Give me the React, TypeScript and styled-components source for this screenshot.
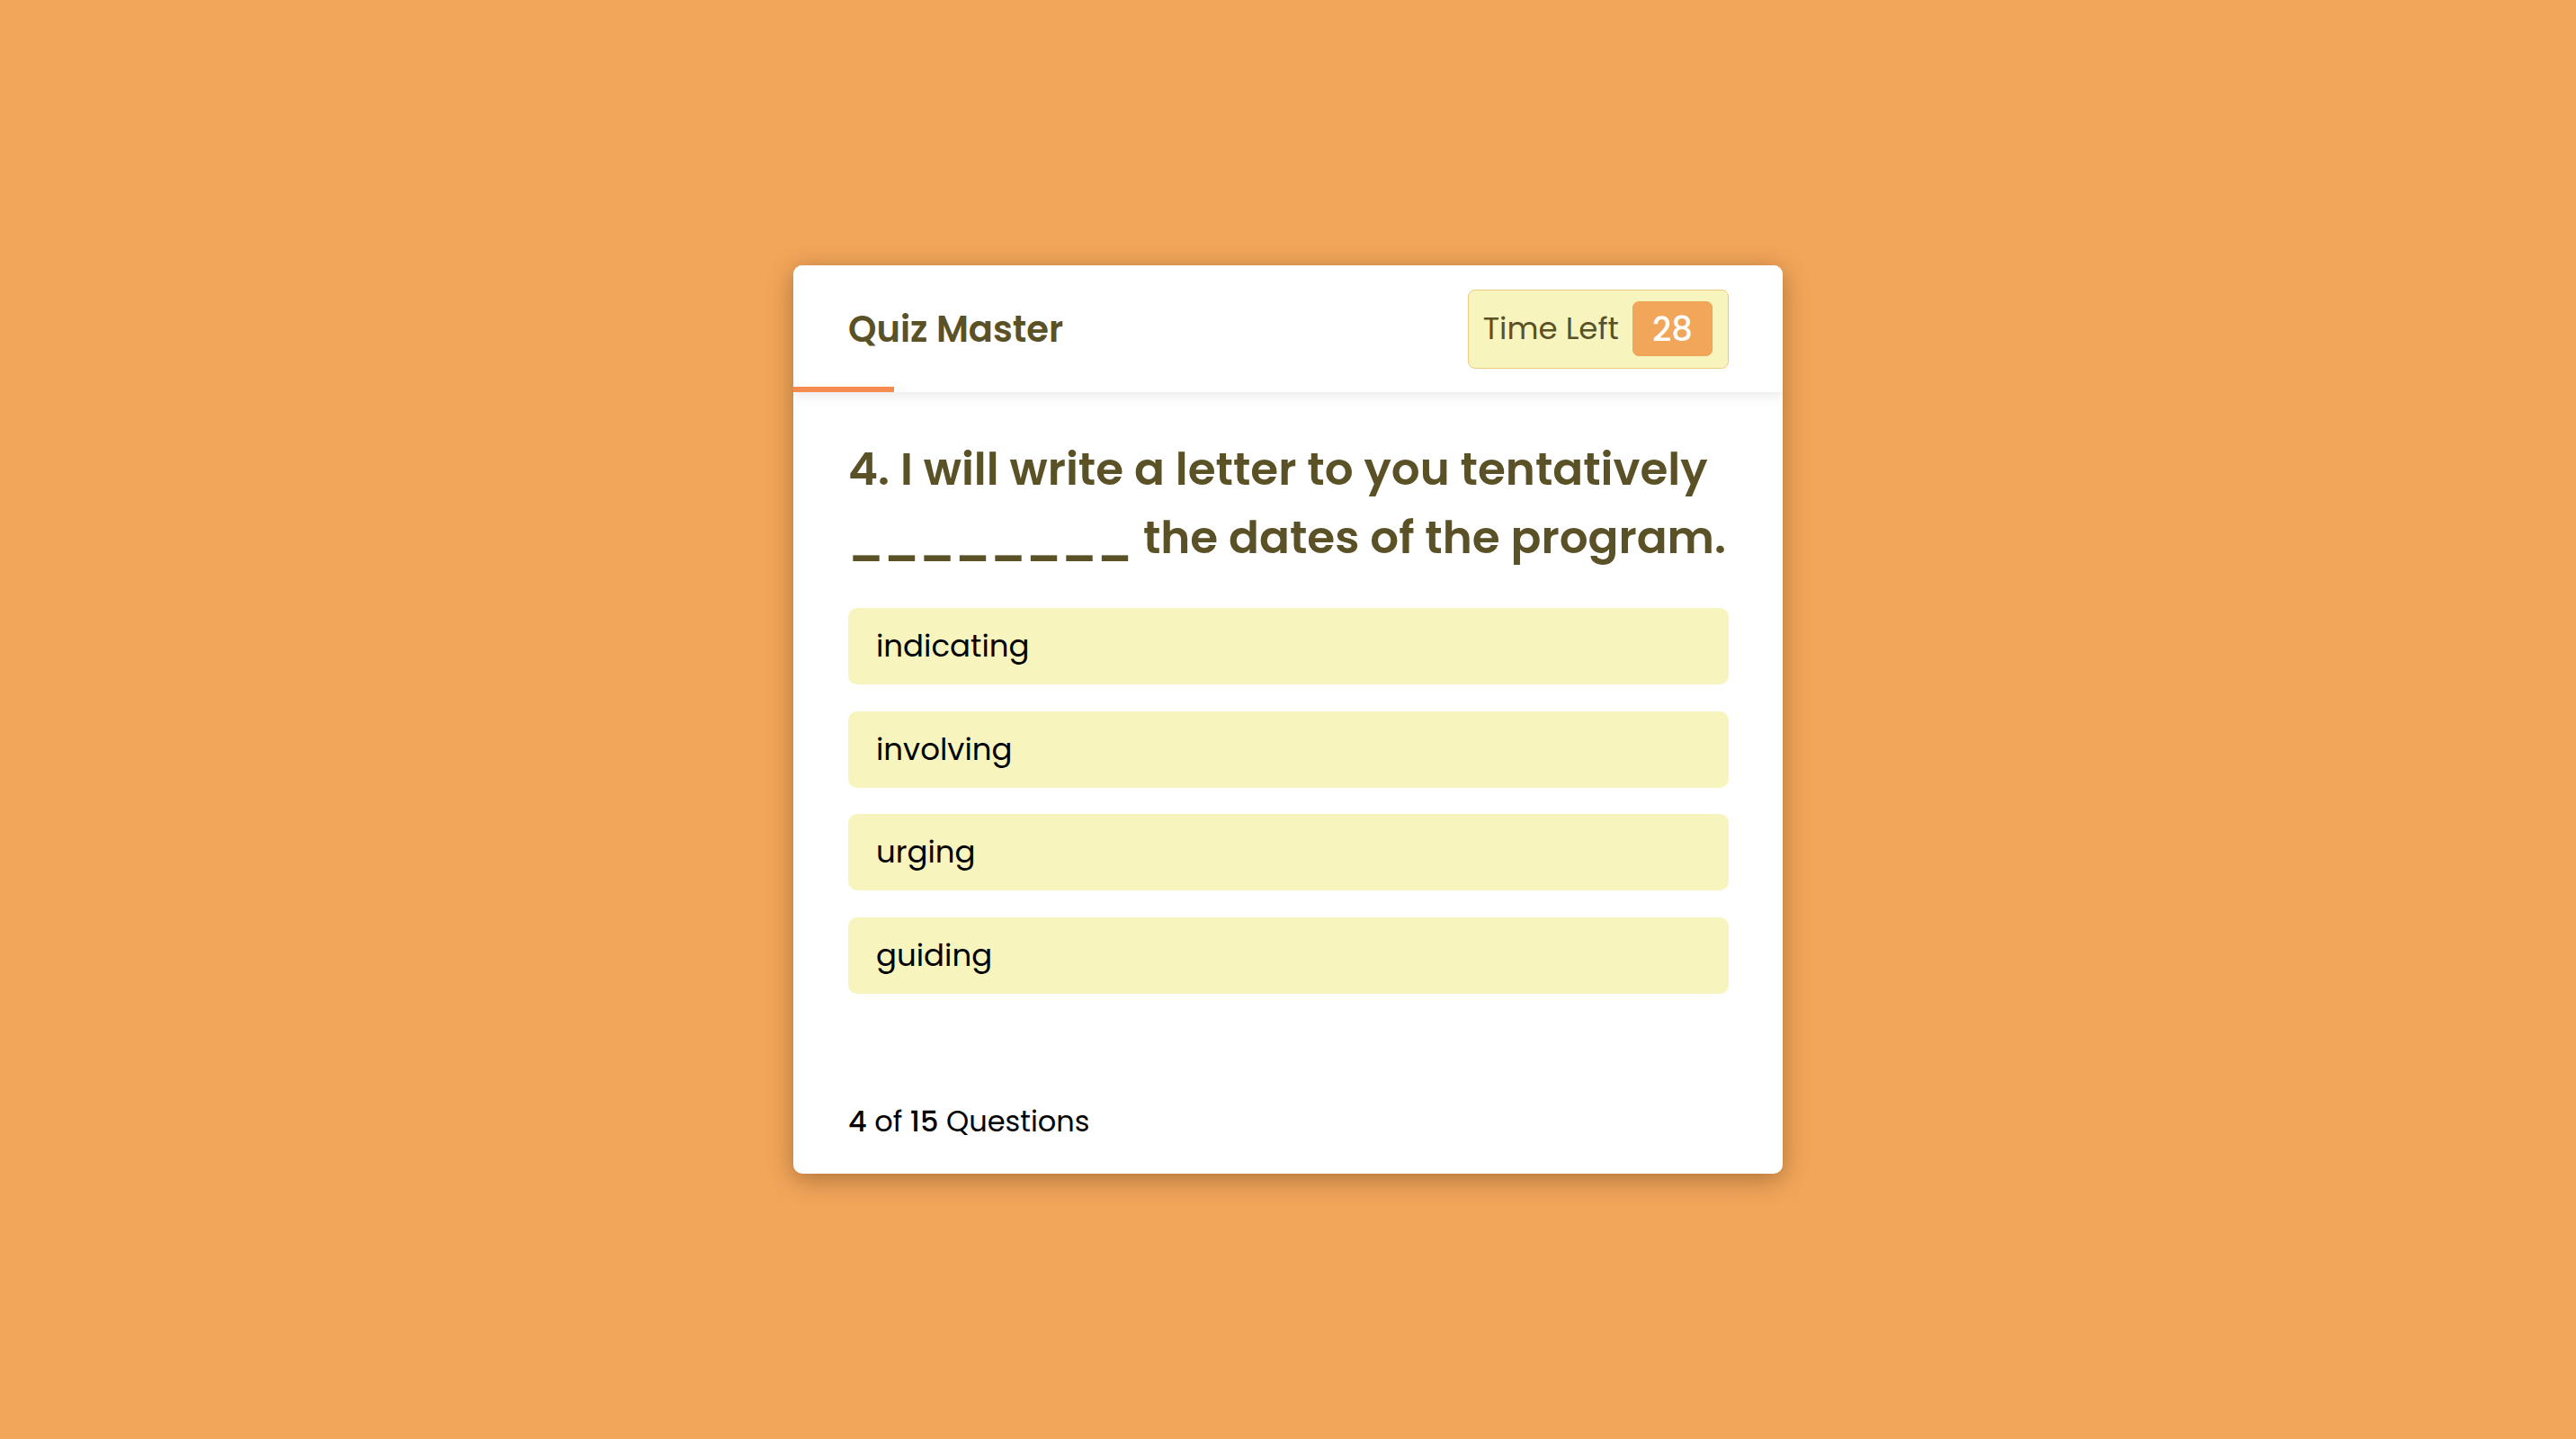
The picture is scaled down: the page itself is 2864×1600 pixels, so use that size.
import React from "react";
import styled, { createGlobalStyle } from "styled-components";

const GlobalStyle = createGlobalStyle`
  html, body {
    margin: 0;
    padding: 0;
    background: #f2a65a;
  }
  body {
    font-family: Poppins, "Open Sans", "Noto Sans", sans-serif;
  }
  * { box-sizing: border-box; }
`;

const Page = styled.main`
  min-height: 100vh;
  display: flex;
  align-items: center;
  justify-content: center;
`;

const Card = styled.section`
  width: 1100px;
  background: #ffffff;
  border-radius: 10px;
  box-shadow: 0 6px 28px rgba(60, 30, 0, 0.38);
  overflow: hidden;
`;

const Header = styled.header`
  position: relative;
  z-index: 1;
  height: 141px;
  padding: 0 60px 0 61px;
  display: flex;
  align-items: center;
  justify-content: space-between;
  background: #ffffff;
  box-shadow: 0 3px 14px rgba(0, 0, 0, 0.1);
`;

const Title = styled.h1`
  margin: 0;
  font-size: 40px;
  font-weight: 600;
  color: #5b5127;
`;

const Timer = styled.div`
  display: flex;
  align-items: center;
  gap: 15px;
  height: 88px;
  padding: 0 17px 0 16px;
  background: #f7f4bd;
  border: 1px solid #efc97f;
  border-radius: 8px;
`;

const TimerLabel = styled.span`
  font-size: 34px;
  font-weight: 400;
  color: #5b5127;
`;

const TimerValue = styled.span`
  width: 89px;
  height: 61px;
  display: flex;
  align-items: center;
  justify-content: center;
  background: #f2a65a;
  border: 1px solid #eda456;
  border-radius: 7px;
  color: #ffffff;
  font-size: 37px;
  font-weight: 500;
`;

const TimeBar = styled.div`
  position: absolute;
  left: 0;
  bottom: 0;
  height: 6px;
  background: #f68b4f;
`;

const Body = styled.div`
  padding: 48px 56px 0 61px;
`;

const Question = styled.h2`
  margin: 0;
  font-size: 50px;
  line-height: 76px;
  font-weight: 600;
  color: #5b5127;
`;

const Blank = styled.span`
  white-space: nowrap;
`;

const Options = styled.ul`
  list-style: none;
  margin: 40px 4px 0 0;
  padding: 0;
  display: flex;
  flex-direction: column;
  gap: 29.5px;
`;

const Option = styled.li`
  height: 85px;
  padding: 0 31px;
  display: flex;
  align-items: center;
  background: #f7f4bd;
  border-radius: 10px;
  font-size: 34px;
  color: #000000;
`;

const Footer = styled.footer`
  padding: 118px 60px 34px 61px;
  font-size: 32px;
  line-height: 48px;
  color: #000000;
`;

const Count = styled.b`
  font-weight: 500;
`;

const options = ["indicating", "involving", "urging", "guiding"];

export default function App() {
  const timeFraction = 112 / 1100;
  return (
    <>
      <GlobalStyle />
      <Page>
        <Card>
          <Header>
            <Title>Quiz Master</Title>
            <Timer>
              <TimerLabel>Time Left</TimerLabel>
              <TimerValue>28</TimerValue>
            </Timer>
            <TimeBar style={{ width: `${timeFraction * 100}%` }} />
          </Header>
          <Body>
            <Question>
              4. I will write a letter to you tentatively <Blank>________</Blank> the dates of the program.
            </Question>
            <Options>
              {options.map((o) => (
                <Option key={o}>{o}</Option>
              ))}
            </Options>
          </Body>
          <Footer>
            <Count>4</Count> of <Count>15</Count> Questions
          </Footer>
        </Card>
      </Page>
    </>
  );
}
